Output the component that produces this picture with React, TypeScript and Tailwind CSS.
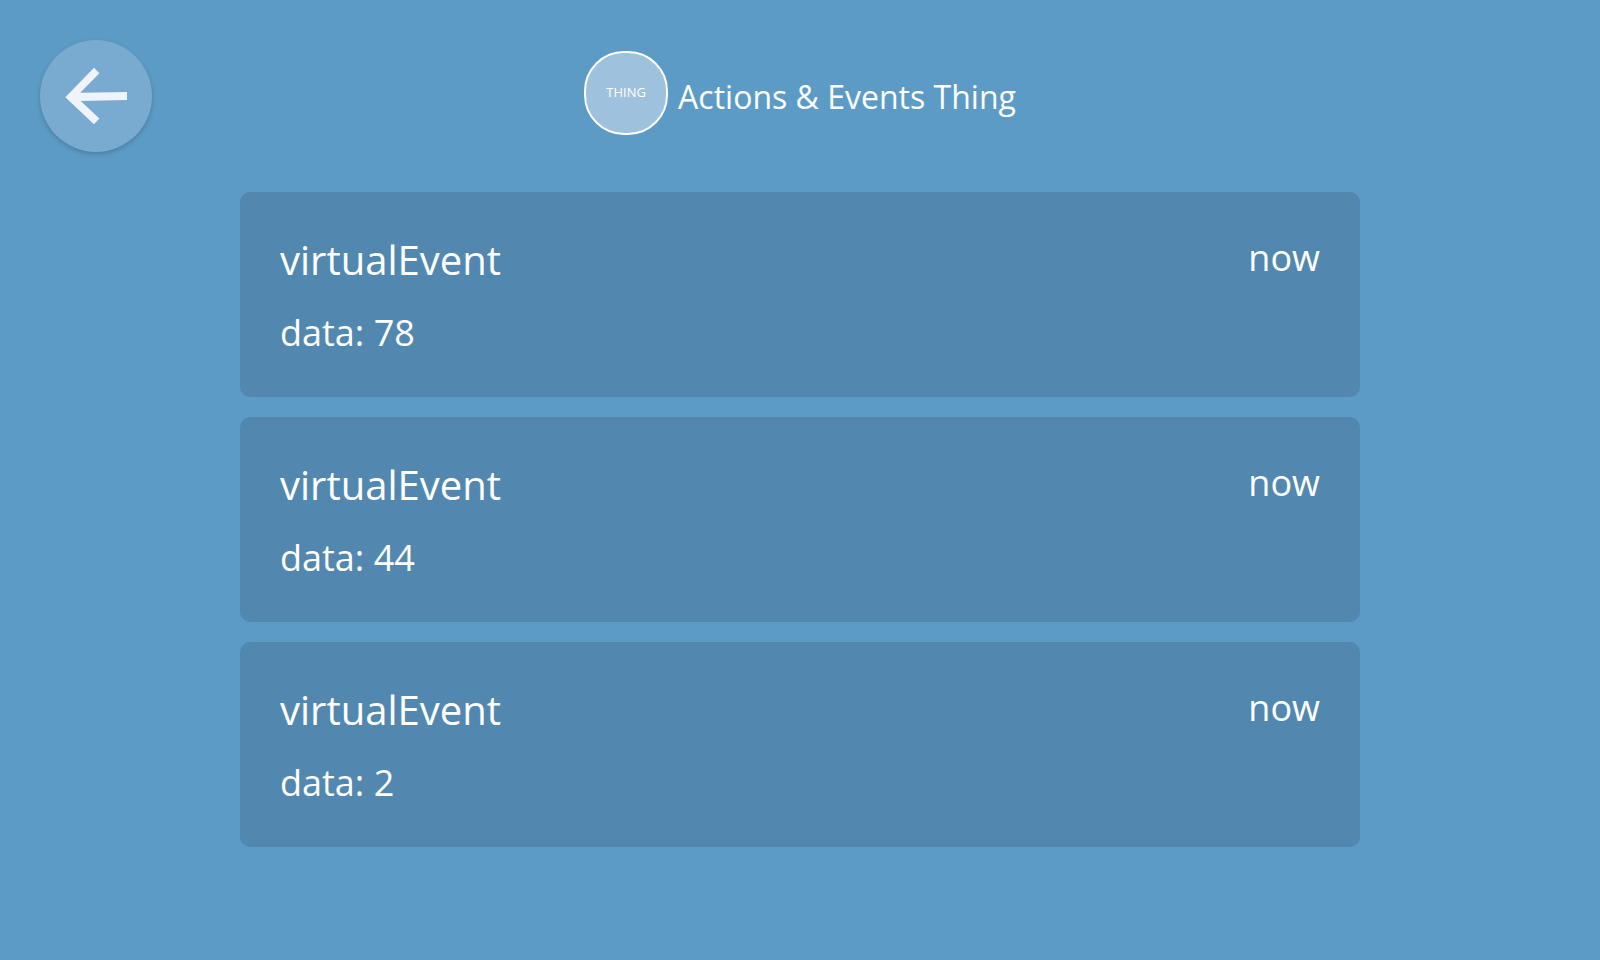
type ThingEvent = { id: number; name: string; data: number; time: string };

const events: ThingEvent[] = [
  { id: 1, name: "virtualEvent", data: 78, time: "now" },
  { id: 2, name: "virtualEvent", data: 44, time: "now" },
  { id: 3, name: "virtualEvent", data: 2, time: "now" },
];

function BackButton() {
  return (
    <button
      type="button"
      aria-label="Back"
      className="size-28 rounded-full bg-[#79abd1] shadow-[0_2px_5px_rgba(0,0,0,0.2)]"
    >
      <svg viewBox="0 0 112 112" className="size-full" aria-hidden="true">
        <path
          d="M25.3 57.3 54 27.7 59.4 33.3 40.2 52.7 87 52V60L40.7 61 59.4 78.6 54 84.3Z"
          fill="#eef4f9"
        />
      </svg>
    </button>
  );
}

function EventCard({ event }: { event: ThingEvent }) {
  return (
    <li className="flex items-start justify-between rounded-[10px] bg-[#5288af] px-10 pt-10 pb-[38px]">
      <div>
        <h2 className="text-[40px] leading-14">{event.name}</h2>
        <p className="mt-[18px] text-4xl leading-[53px]">data: {event.data}</p>
      </div>
      <time className="text-4xl leading-13">{event.time}</time>
    </li>
  );
}

export default function App() {
  return (
    <div className="min-h-screen bg-[#5d9bc7] font-['Open_Sans',sans-serif] font-[450] text-white">
      <header className="grid grid-cols-[1fr_auto_1fr] items-start px-10 pt-10">
        <BackButton />
        <div className="flex items-start gap-2.5 pt-[11px]">
          <div className="flex size-21 items-center justify-center rounded-[40px] border-2 border-white bg-[#9ec2dd] text-[13px]">
            THING
          </div>
          <h1 className="pt-6 text-[32px] leading-11">Actions &amp; Events Thing</h1>
        </div>
      </header>
      <main className="mx-auto w-[70%] pt-10">
        <ul className="flex flex-col gap-5">
          {events.map((event) => (
            <EventCard key={event.id} event={event} />
          ))}
        </ul>
      </main>
    </div>
  );
}
